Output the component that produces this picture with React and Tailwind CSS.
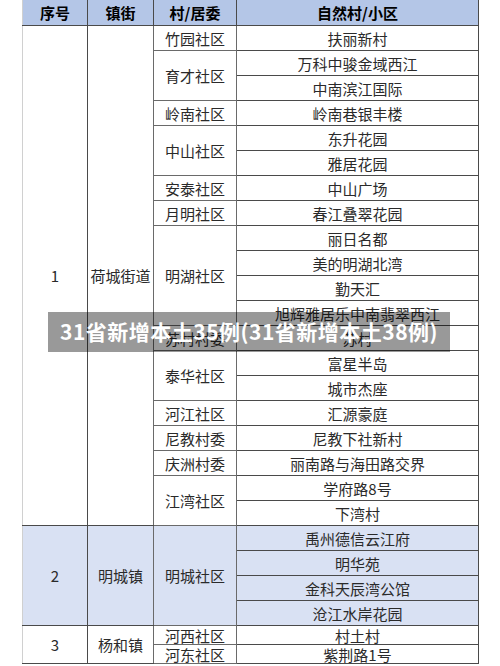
import React from "react";

const sections = [
  {
    no: "1",
    town: "荷城街道",
    bg: "bg-white",
    rowH: "h-[25px]",
    villages: [
      ["竹园社区", ["扶丽新村"]],
      ["育才社区", ["万科中骏金域西江", "中南滨江国际"]],
      ["岭南社区", ["岭南巷银丰楼"]],
      ["中山社区", ["东升花园", "雅居花园"]],
      ["安泰社区", ["中山广场"]],
      ["月明社区", ["春江叠翠花园"]],
      ["明湖社区", ["丽日名都", "美的明湖北湾", "勤天汇", "旭辉雅居乐中南翡翠西江"]],
      ["苏村村委", ["苏村"]],
      ["泰华社区", ["富星半岛", "城市杰座"]],
      ["河江社区", ["汇源豪庭"]],
      ["尼教村委", ["尼教下社新村"]],
      ["庆洲村委", ["丽南路与海田路交界"]],
      ["江湾社区", ["学府路8号", "下湾村"]],
    ],
  },
  {
    no: "2",
    town: "明城镇",
    bg: "bg-[#d9e1f3]",
    rowH: "h-[25px]",
    villages: [["明城社区", ["禹州德信云江府", "明华苑", "金科天辰湾公馆", "沧江水岸花园"]]],
  },
  {
    no: "3",
    town: "杨和镇",
    bg: "bg-white",
    rowH: "h-[19px]",
    villages: [
      ["河西社区", ["村土村"]],
      ["河东社区", ["紫荆路1号"]],
    ],
  },
];

const cell = "border border-[#4a4a4a] text-center align-middle p-0 leading-none";

const Section = ({ data, last }) => {
  const total = data.villages.reduce((n, v) => n + v[1].length, 0);
  const rows = [];
  data.villages.forEach(([village, places], vi) => {
    places.forEach((place, pi) => {
      const first = vi === 0 && pi === 0;
      rows.push(
        <tr key={village + place} className={`${data.rowH} ${data.bg}`}>
          {first && (
            <>
              <td rowSpan={total} className={`${cell} border-l-[#d0d0d0]`}>
                {data.no}
              </td>
              <td rowSpan={total} className={`${cell} border-r-[#6a6a6a]`}>
                {data.town}
              </td>
            </>
          )}
          {pi === 0 && (
            <td rowSpan={places.length} className={`${cell} border-[#6a6a6a]`}>
              {village}
            </td>
          )}
          <td className={cell}>{place}</td>
        </tr>
      );
    });
  });
  return <>{rows}</>;
};

export default function App() {
  return (
    <div
      className="relative w-[500px] h-[666px] overflow-hidden bg-white text-[15px] text-[#2a2a2a]"
      style={{ fontFamily: '"Noto Sans CJK SC", "Noto Sans", sans-serif' }}
    >
      <table className="ml-[22px] mt-[-1px] w-[456px] table-fixed border-collapse">
        <colgroup>
          <col className="w-[65px]" />
          <col className="w-[66px]" />
          <col className="w-[83px]" />
          <col className="w-[242px]" />
        </colgroup>
        <thead>
          <tr className="h-[26px] bg-[#b4c6e7] font-bold text-black">
            <th className={`${cell} border-l-[#d0d0d0]`}>序号</th>
            <th className={cell}>镇街</th>
            <th className={cell}>村/居委</th>
            <th className={cell}>自然村/小区</th>
          </tr>
        </thead>
        <tbody>
          {sections.map((s, i) => (
            <Section key={s.no} data={s} last={i === sections.length - 1} />
          ))}
        </tbody>
      </table>

      <div className="absolute left-[48px] top-[312px] flex h-[40px] w-[402px] items-center justify-center bg-black/40">
        <span className="text-[21px] font-bold tracking-[0.5px] text-white">
          31省新增本土35例(31省新增本土38例)
        </span>
      </div>
    </div>
  );
}
